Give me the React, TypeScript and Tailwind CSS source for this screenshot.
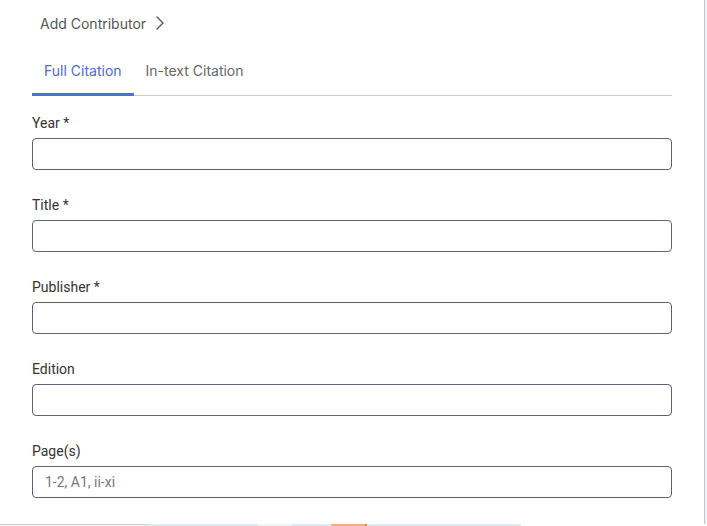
import { ChevronRight } from "lucide-react";

const fields = [
  { label: "Year *", placeholder: "" },
  { label: "Title *", placeholder: "" },
  { label: "Publisher *", placeholder: "" },
  { label: "Edition", placeholder: "" },
  { label: "Page(s)", placeholder: "1-2, A1, ii-xi" },
];

export default function App() {
  return (
    <div className="w-[707px] h-[526px] bg-white flex flex-col overflow-hidden">
      <div className="flex-1 flex min-h-0">
        <div className="w-[704px] pl-[32px] pr-[32px]">
          <button className="mt-[13px] ml-[8px] flex items-center h-[20px] text-[14px] text-[#555] font-['Inter',sans-serif]">
            Add Contributor
            <ChevronRight size={24} strokeWidth={1.4} className="ml-[2px] text-[#555]" />
          </button>

          <div className="mt-[28px] flex border-b border-[#c9cbd9] font-['Inter',sans-serif] text-[14px]">
            <button className="px-[12px] pb-[12px] h-[35px] leading-[20px] text-[#4a6ad8] border-b-[3px] border-[#4b6fdd] -mb-px">
              Full Citation
            </button>
            <button className="px-[12px] pb-[12px] h-[35px] leading-[20px] text-[#666] border-b-[3px] border-transparent -mb-px">
              In-text Citation
            </button>
          </div>

          <div className="mt-[17px] flex flex-col gap-[25px] font-['Roboto',sans-serif]">
            {fields.map((f) => (
              <div key={f.label} className="flex flex-col gap-[5px]">
                <label className="text-[14px] leading-[20px] text-[#333]">{f.label}</label>
                <input
                  placeholder={f.placeholder}
                  className="h-[32px] w-full rounded-[4px] border border-[#5d6376] px-[12px] text-[14px] text-[#333] placeholder:text-[#777] outline-none"
                />
              </div>
            ))}
          </div>
        </div>
        <div className="w-px bg-[#c3c6d3]" />
        <div className="flex-1 bg-[#eef2f6]" />
      </div>
      <div className="h-[2px] flex">
        <div className="w-[148px] border-t border-[#cfcfcf] bg-[#f2f2f2]" />
        <div className="w-[110px] bg-[#dcebf2]" />
        <div className="w-[34px] bg-[#f0f5f8]" />
        <div className="w-[39px] bg-[#dcebf2]" />
        <div className="w-[34px] bg-[#f7b07c]" />
        <div className="w-[2px] bg-[#e0874a]" />
        <div className="w-[154px] bg-[#dcebf2]" />
      </div>
    </div>
  );
}
